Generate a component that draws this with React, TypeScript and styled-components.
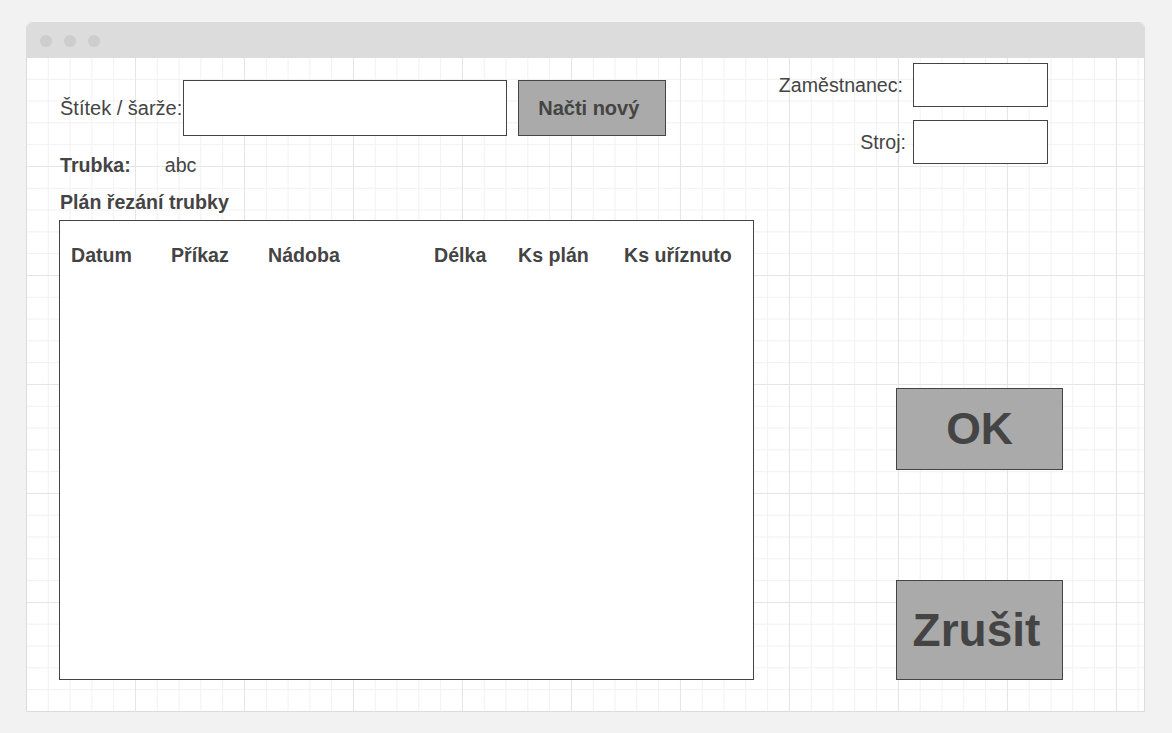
import React from "react";
import styled, { createGlobalStyle } from "styled-components";

const Global = createGlobalStyle`
  html, body { margin: 0; padding: 0; background: #f2f2f2; }
  body { font-family: "Liberation Sans", Arial, sans-serif; color: #444; }
  * { box-sizing: border-box; }
`;

const Page = styled.div`
  width: 1172px;
  height: 733px;
  padding: 22px 0 0 26px;
`;

const Window = styled.div`
  width: 1119px;
  height: 690px;
  border: 1px solid #dcdcdc;
  border-radius: 6px 6px 0 0;
  background: #fff;
  display: flex;
  flex-direction: column;
  overflow: hidden;
`;

const TitleBar = styled.div`
  height: 35px;
  background: #dcdcdc;
  display: flex;
  align-items: center;
  gap: 12px;
  padding-left: 13px;
  flex-shrink: 0;
`;

const Dot = styled.span`
  width: 12px;
  height: 12px;
  border-radius: 50%;
  background: #cdcdcd;
`;

const Canvas = styled.div`
  flex: 1;
  display: flex;
  background-color: #fff;
  background-image:
    linear-gradient(to right, #e5e5e5 1px, transparent 1px),
    linear-gradient(to bottom, #e5e5e5 1px, transparent 1px),
    linear-gradient(to right, #f1f1f1 1px, transparent 1px),
    linear-gradient(to bottom, #f1f1f1 1px, transparent 1px);
  background-size: 109px 109px, 109px 109px, 21.8px 21.8px, 21.8px 21.8px;
  background-position: -1px -1px;
`;

const LeftColumn = styled.div`
  width: 727px;
  padding: 22px 0 0 32px;
  display: flex;
  flex-direction: column;
`;

const Row = styled.div`
  display: flex;
  align-items: center;
`;

const Label = styled.span<{ $bold?: boolean }>`
  font-size: 19.6px;
  font-weight: ${(p) => (p.$bold ? 700 : 400)};
  color: #444;
  white-space: nowrap;
`;

const ScanLabel = styled(Label)`
  margin-left: 1px;
  margin-right: 1px;
  font-size: 20px;
`;

const TextBox = styled.div<{ $w: number; $h: number }>`
  width: ${(p) => p.$w}px;
  height: ${(p) => p.$h}px;
  border: 1px solid #444;
  background: #fff;
`;

const GreyButton = styled.div<{ $w: number; $h: number; $size: number }>`
  width: ${(p) => p.$w}px;
  height: ${(p) => p.$h}px;
  border: 1px solid #444;
  background: #aaaaaa;
  color: #444;
  font-weight: 700;
  font-size: ${(p) => p.$size}px;
  display: flex;
  align-items: center;
  justify-content: center;
`;

const LoadButton = styled(GreyButton)`
  margin-left: 11px;
  padding-right: 7px;
`;

const CancelButton = styled(GreyButton)`
  padding-right: 6px;
`;

const InfoRow = styled(Row)`
  margin-top: 18px;
  gap: 34px;
  height: 22px;
  margin-left: 1px;
`;

const Heading = styled(Label)`
  margin-top: 15px;
  margin-left: 1px;
  line-height: 22px;
`;

const Table = styled.div`
  margin-top: 7px;
  width: 695px;
  height: 460px;
  border: 1px solid #444;
  background: #fff;
  padding: 23px 0 0 11px;
`;

const HeaderRow = styled.div`
  display: flex;
  align-items: center;
  height: 22px;
`;

const HeaderCell = styled.span<{ $w: number }>`
  width: ${(p) => p.$w}px;
  font-size: 19.6px;
  font-weight: 700;
  color: #444;
  white-space: nowrap;
`;

const RightColumn = styled.div`
  flex: 1;
  padding-top: 5px;
  display: flex;
  flex-direction: column;
`;

const FormGrid = styled.div`
  display: grid;
  grid-template-columns: 149px 135px;
  column-gap: 10px;
  row-gap: 13px;
  align-items: center;
`;

const FormLabel = styled(Label)<{ $shift?: number }>`
  justify-self: end;
  margin-right: ${(p) => p.$shift ?? 0}px;
`;

const Actions = styled.div`
  margin: 224px 0 0 142px;
  display: flex;
  flex-direction: column;
  gap: 110px;
`;

const columns: [string, number][] = [
  ["Datum", 100],
  ["Příkaz", 97],
  ["Nádoba", 166],
  ["Délka", 84],
  ["Ks plán", 106],
  ["Ks uříznuto", 120],
];

export default function App() {
  return (
    <>
      <Global />
      <Page>
        <Window>
          <TitleBar>
            <Dot />
            <Dot />
            <Dot />
          </TitleBar>
          <Canvas>
            <LeftColumn>
              <Row>
                <ScanLabel>Štítek / šarže:</ScanLabel>
                <TextBox $w={324} $h={56} />
                <LoadButton $w={148} $h={56} $size={20}>
                  Načti nový
                </LoadButton>
              </Row>
              <InfoRow>
                <Label $bold>Trubka:</Label>
                <Label>abc</Label>
              </InfoRow>
              <Heading $bold>Plán řezání trubky</Heading>
              <Table>
                <HeaderRow>
                  {columns.map(([name, w]) => (
                    <HeaderCell key={name} $w={w}>
                      {name}
                    </HeaderCell>
                  ))}
                </HeaderRow>
              </Table>
            </LeftColumn>
            <RightColumn>
              <FormGrid>
                <FormLabel>Zaměstnanec:</FormLabel>
                <TextBox $w={135} $h={44} />
                <FormLabel $shift={-3}>Stroj:</FormLabel>
                <TextBox $w={135} $h={44} />
              </FormGrid>
              <Actions>
                <GreyButton $w={167} $h={82} $size={44.5}>
                  OK
                </GreyButton>
                <CancelButton $w={167} $h={100} $size={46}>
                  Zrušit
                </CancelButton>
              </Actions>
            </RightColumn>
          </Canvas>
        </Window>
      </Page>
    </>
  );
}
